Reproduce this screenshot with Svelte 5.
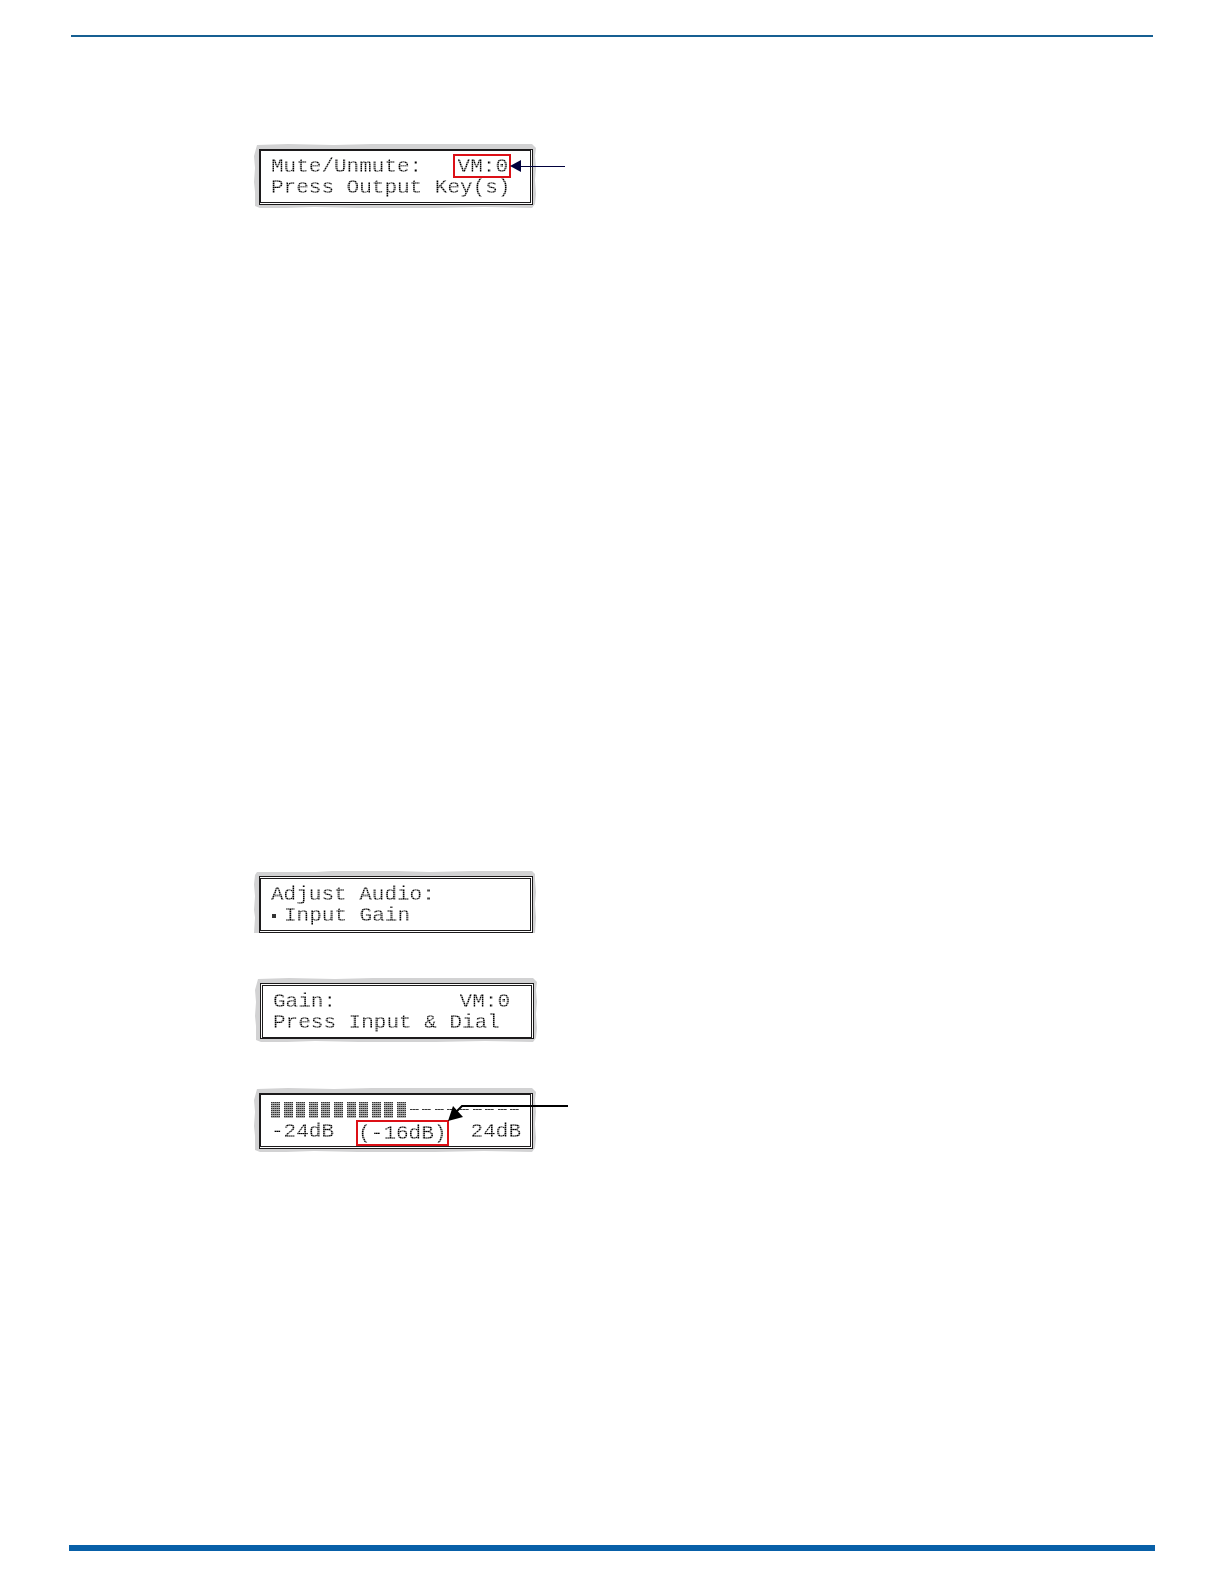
<script>
  const cells = Array.from({ length: 20 }, (_, i) => i < 11);
</script>

{#snippet backing(cut)}
  <svg class="backing" viewBox="0 0 282 64" preserveAspectRatio="none" aria-hidden="true">
    <path
      fill="#d2d2d3"
      d={cut
        ? 'M3 1 L62 1 L78 0 L142 0 L176 1 L218 0 L278 0 L281 3 L281 9 L282 22 L281 34 L282 48 L281 64 L0 64 L1 48 L0 40 L1 26 L0 14 L1 4 Z'
        : 'M3 1 L34 0 L80 1 L118 0 L190 0 L240 0 L278 0 L282 4 L281 12 L282 24 L281 36 L282 50 L281 60 L278 64 L230 63 L180 64 L150 64 L104 64 L60 63 L32 64 L6 64 L1 62 L1 48 L0 38 L1 24 L0 12 Z'}
    />
  </svg>
{/snippet}

<main>
  <hr class="top" />

  <figure class="mute">
    {@render backing(false)}
    <div class="lcd">
      <p><span class="dots">Mute/Unmute:</span><span class="mark"><span class="dots">VM:0</span></span></p>
      <p><span class="dots">Press Output Key(s)</span></p>
    </div>
    <svg class="arrow level" width="56" height="14" viewBox="0 0 56 14" aria-hidden="true">
      <path d="M10 7.5H55" stroke="#00003c" stroke-width="1" />
      <path d="M0 7L11 1V13Z" fill="#00003c" />
    </svg>
  </figure>

  <figure class="adjust">
    {@render backing(true)}
    <div class="lcd">
      <p><span class="dots">Adjust Audio:</span></p>
      <p class="item"><span class="bullet"></span><span class="dots">Input Gain</span></p>
    </div>
  </figure>

  <figure class="gain">
    {@render backing(false)}
    <div class="lcd">
      <p><span class="dots">Gain:</span><span class="dots">VM:0</span></p>
      <p><span class="dots">Press Input &amp; Dial</span></p>
    </div>
  </figure>

  <figure class="level-view">
    {@render backing(false)}
    <div class="lcd">
      <div class="meter" role="meter" aria-label="Gain" aria-valuemin="-24" aria-valuemax="24" aria-valuenow="-16">
        {#each cells as on}
          <svg class="cell" viewBox="0 0 9 16" aria-hidden="true">
            {#if on}
              <rect width="9" height="16" fill="#b4b4b4" />
              <path d="M0 .5H9M0 2.5H9M0 4.5H9M0 6.5H9M0 8.5H9M0 10.5H9M0 12.5H9M0 14.5H9" stroke="#333" stroke-dasharray="1 1" />
              <path d="M0 .5H9M0 2.5H9M0 4.5H9M0 6.5H9M0 8.5H9M0 10.5H9M0 12.5H9M0 14.5H9" stroke="#333" opacity=".45" />
            {:else}
              <path d="M0 7.5H9" stroke="#222" stroke-dasharray="2 1" />
              <path d="M0 7.5H9" stroke="#444" opacity=".7" />
            {/if}
          </svg>
        {/each}
      </div>
      <p class="scale"><span class="dots">-24dB</span><span class="mark low"><span class="dots">(-16dB)</span></span><span class="dots">24dB</span></p>
    </div>
    <svg class="arrow bent" width="122" height="18" viewBox="0 0 122 18" aria-hidden="true">
      <path d="M7 10L14 3H120" fill="none" stroke="#000" stroke-width="2" />
      <path d="M0 18L5 3L15 14Z" fill="#000" />
    </svg>
  </figure>

  <hr class="bottom" />
</main>

<style>
  :global(body) {
    margin: 0;
    background: #fff;
  }

  main {
    display: flex;
    flex-direction: column;
    min-height: 100vh;
    box-sizing: border-box;
    padding: 35px 69px 33px;
    font-family: "Liberation Mono", monospace;
    color: #000;
  }

  hr {
    border: 0;
    margin: 0;
  }

  .top {
    height: 2px;
    margin: 0 2px;
    background: #165f92;
  }

  .bottom {
    height: 6px;
    margin-top: auto;
    background: #0860a8;
  }

  figure {
    position: relative;
    width: 282px;
    box-sizing: border-box;
    margin: 0 0 0 185px;
    padding: 5px 3px 3px 5px;
  }

  .mute {
    margin-top: 107px;
  }

  .adjust {
    margin-top: 663px;
    padding-bottom: 0;
  }

  .gain {
    margin-top: 45px;
    margin-left: 186px;
  }

  .level-view {
    margin-top: 46px;
  }

  .backing {
    position: absolute;
    inset: 0;
    width: 100%;
    height: 100%;
  }

  .lcd {
    position: relative;
    box-sizing: border-box;
    min-height: 56px;
    padding: 5px 0 4px 10px;
    background: #fff;
    border: 2px solid #1c1a1b;
    border-right: 3px double #1c1a1b;
    border-bottom: 3px double #1c1a1b;
  }

  .adjust .lcd {
    border-top: 3px double #1c1a1b;
  }

  .gain .lcd {
    border: 3px double #1c1a1b;
    border-bottom: 2px solid #1c1a1b;
  }

  p {
    display: flex;
    justify-content: space-between;
    width: 237px;
    margin: 0;
    height: 21px;
    font-size: 21px;
    line-height: 21px;
    white-space: nowrap;
  }

  .item {
    justify-content: flex-start;
    align-items: center;
    gap: 8px;
  }

  .scale {
    width: 250px;
  }

  .dots {
    display: block;
    -webkit-mask-image: repeating-linear-gradient(90deg, #000 0 1px, rgba(0, 0, 0, 0.7) 1px 2px),
      repeating-linear-gradient(#000 0 1px, rgba(0, 0, 0, 0.5) 1px 2px);
    mask-image: repeating-linear-gradient(90deg, #000 0 1px, rgba(0, 0, 0, 0.7) 1px 2px),
      repeating-linear-gradient(#000 0 1px, rgba(0, 0, 0, 0.5) 1px 2px);
    mask-composite: intersect;
  }

  .bullet {
    width: 4px;
    height: 4px;
    margin-left: 1px;
    background: #333;
  }

  .mark {
    position: relative;
    display: block;
  }

  .mark::after {
    content: "";
    position: absolute;
    inset: -2px -3px -1px -5px;
    border: 2px solid #dc1017;
  }

  .low {
    top: 2px;
  }

  .low::after {
    inset: -3px -3px -2px -2px;
  }

  .arrow {
    position: absolute;
  }

  .level {
    left: 256px;
    top: 15px;
  }

  .bent {
    left: 194px;
    top: 15px;
  }

  .meter {
    display: grid;
    grid-template-columns: repeat(20, 1fr);
    width: 252px;
    height: 21px;
    padding-top: 2px;
    box-sizing: border-box;
  }

  .cell {
    width: 9px;
    height: 16px;
  }
</style>
